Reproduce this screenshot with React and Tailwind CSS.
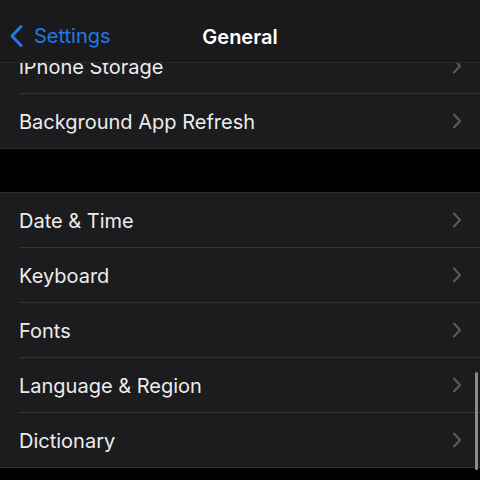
import { useState } from 'react';

const groups = [
  ['iPhone Storage', 'Background App Refresh'],
  ['Date & Time', 'Keyboard', 'Fonts', 'Language & Region', 'Dictionary'],
];

const Chevron = () => (
  <svg width="10" height="16" viewBox="0 0 10 16" fill="none" className="shrink-0">
    <path d="M2 1.5 L8 8 L2 14.5" stroke="#5b5b5f" strokeWidth="2" strokeLinecap="round" strokeLinejoin="round" />
  </svg>
);

const Row = ({ label, last }) => (
  <div className={`flex items-stretch bg-[#1c1c1e] pl-[19px] ${last ? 'h-[54px]' : 'h-[55px]'}`}>
    <div
      className={`flex flex-1 items-center justify-between pr-[18px] ${last ? '' : 'border-b border-[#333335]'}`}
    >
      <span className="pt-[2px] text-[20px] text-[#ececec]">{label}</span>
      <Chevron />
    </div>
  </div>
);

const App = () => {
  const [title] = useState('General');

  return (
    <div
      className="relative h-[480px] w-[480px] overflow-hidden bg-black"
      style={{ fontFamily: 'Inter, "Noto Sans", sans-serif' }}
    >
      {/* Nav bar */}
      <div className="absolute inset-x-0 top-0 z-10 flex h-[63px] items-center justify-center border-b border-[#2a2a2c] bg-[#1a1a1c]">
        <div className="absolute left-[9px] top-[21px] flex items-center gap-[10px]">
          <svg width="15" height="24" viewBox="0 0 15 24" fill="none">
            <path d="M12 2.5 L3 12 L12 21.5" stroke="#2178e6" strokeWidth="3" strokeLinecap="round" strokeLinejoin="round" />
          </svg>
          <span className="text-[20px] text-[#2178e6]">Settings</span>
        </div>
        <span className="pt-[11px] text-[20px] font-semibold text-white">{title}</span>
      </div>

      {/* List */}
      <div className="pt-[39px]">
        <div className="border-b border-[#2e2e30]">
          {groups[0].map((label, i) => (
            <Row key={label} label={label} last={i === groups[0].length - 1} />
          ))}
        </div>
        <div className="mt-[43px] border-y border-[#2e2e30]">
          {groups[1].map((label, i) => (
            <Row key={label} label={label} last={i === groups[1].length - 1} />
          ))}
        </div>
      </div>

      {/* Scroll indicator */}
      <div className="absolute right-[2px] top-[372px] h-[98px] w-[3px] rounded-full bg-[#8a8a8e]" />
    </div>
  );
};

export default App;
